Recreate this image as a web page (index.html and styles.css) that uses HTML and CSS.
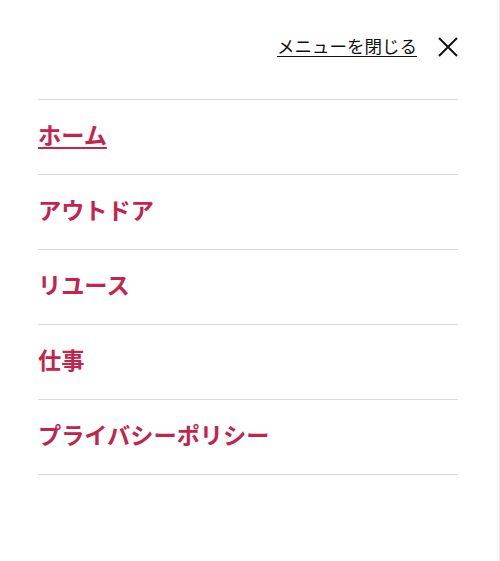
FILE: index.html
```html
<!DOCTYPE html>
<html lang="ja">
<head>
<meta charset="utf-8">
<link rel="stylesheet" href="styles.css">
</head>
<body>
<div class="panel">
  <div class="head">
    <a class="close-link" href="#">メニューを閉じる</a>
    <svg class="close-x" width="20" height="20" viewBox="0 0 20 20"><path d="M1 1 L19 19 M19 1 L1 19" stroke="#111" stroke-width="2" fill="none"/></svg>
  </div>
  <ul class="nav">
    <li><a class="current" href="#">ホーム</a></li>
    <li><a href="#">アウトドア</a></li>
    <li><a href="#">リユース</a></li>
    <li><a href="#">仕事</a></li>
    <li><a href="#">プライバシーポリシー</a></li>
  </ul>
</div>
</body>
</html>
```
FILE: styles.css
```css
html, body { margin: 0; padding: 0; background: #fff; }
body { font-family: "Noto Sans CJK JP", "Noto Sans", sans-serif; }
.panel {
  box-sizing: border-box;
  width: 500px;
  height: 561px;
  padding: 0 41px 0 38px;
  border-right: 1px solid #ececec;
}
.head {
  height: 99px;
  display: flex;
  justify-content: flex-end;
  align-items: flex-start;
  gap: 21px;
  padding-top: 35px;
  box-sizing: border-box;
}
.close-link {
  color: #111;
  font-size: 17.5px;
  line-height: 22px;
  text-decoration: underline;
  text-underline-offset: 3px;
  text-decoration-thickness: 1px;
}
.close-x { margin-top: 2px; }
.nav { list-style: none; margin: 0; padding: 0; border-top: 1px solid #d9d9d6; }
.nav li {
  box-sizing: border-box;
  height: 75px;
  padding-top: 19px;
  border-bottom: 1px solid #d9d9d6;
  display: flex;
  align-items: flex-start;
}
.nav a {
  color: #c2244e;
  font-weight: bold;
  font-size: 23.2px;
  text-decoration: none;
  line-height: 30px;
}
.nav a.current { text-decoration: underline; text-underline-offset: 3px; text-decoration-thickness: 2px; }
```
